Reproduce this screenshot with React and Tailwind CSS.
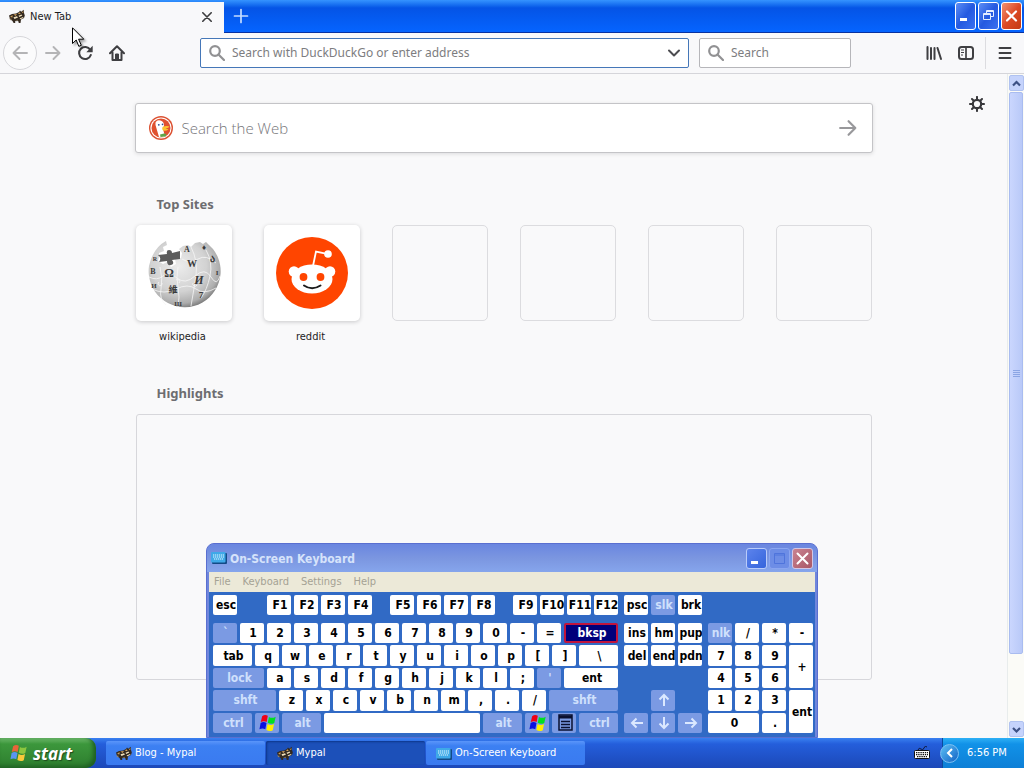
import React from "react";

const UI = "font-['DejaVu_Sans_Condensed','DejaVu_Sans',sans-serif]";
const HUMAN = "font-['Noto_Sans','Open_Sans',sans-serif]";

function Raccoon({ className = "h-4 w-4" }) {
  return (
    <svg viewBox="0 0 16 16" className={className} aria-hidden="true">
      <path d="M0 6.500l3-1.500 4-.5 3-1.500 1-1.500 1.200 1.200L14.700.8 15 4l.8 2.500L15 9l-3 1.500-.5 3.500H9.800l-.6-2-3.200.3.3 1.700H4.600L3.500 12 1 10z" fill="#33291f" />
      <path d="M1 8l2.500-2L3.500 8.500zM4.500 5.500L8 5 6.500 7zM8.800 5l2-1.700.8 1.700zM12.800 3.500l1.500-1.500v2z" fill="#cfa05c" />
      <path d="M4.500 8.300l3.500-1 1 1.200-3.500 1.500zM9.500 6.800l3-1.300.8 1-3 1.500zM10.500 9.500l3.500-1.500.5.800-3 1.500z" fill="#efe0bd" />
      <path d="M0 9.500l2.700.3L2 11.500zM6 11.500l3-.7-.3.900z" fill="#9c8b6f" />
    </svg>
  );
}

function KeyboardIcon({ className }) {
  return (
    <svg viewBox="0 0 16 16" className={className} aria-hidden="true">
      <rect x="1" y="3" width="15" height="11" rx="1" fill="#134a86" />
      <rect x="0" y="2" width="14.500" height="10.500" rx="1" fill="#3fa9e8" />
      <path d="M2 5h11M2 7h11M3 9h9" stroke="#e6faff" strokeWidth="1.200" strokeDasharray="1.300 .7" />
    </svg>
  );
}

function Flag({ className, soft }) {
  const c = soft ? ["#e8643a", "#8cc63f", "#5a95f0", "#f8c93a"] : ["#f00014", "#00e020", "#0a10e0", "#ffef00"];
  return (
    <svg viewBox="0 0 20 20" className={className} aria-hidden="true">
      <path d="M3.500 2.500Q6.500 0 9.800 2L8.500 9Q5.500 7 2 9z" fill={c[0]} />
      <path d="M11 3.200Q14.500 5.500 18.500 3L17 10Q13.500 12 9.800 9.800z" fill={c[1]} />
      <path d="M1.800 10Q5 8 8.300 10L7 17Q4 15 .5 17z" fill={c[2]} />
      <path d="M9.500 11Q13 13.300 16.700 11L15.300 18Q12 20 8.200 17.800z" fill={c[3]} />
    </svg>
  );
}

function Magnifier() {
  return (
    <svg viewBox="0 0 16 16" className="h-4 w-4 shrink-0" fill="none" stroke="#919193" strokeWidth="2.200" aria-hidden="true">
      <circle cx="6" cy="6" r="4.800" />
      <path d="M9.500 9.500L15 15" strokeLinecap="round" />
    </svg>
  );
}

function Arrow({ className, flip, color = "#b4b4b6" }) {
  return (
    <svg viewBox="0 0 16 16" className={className} fill="none" stroke={color} strokeWidth="1.900" strokeLinecap="round" strokeLinejoin="round" aria-hidden="true">
      {flip ? <path d="M15 8H1.500M7.500 2L1.500 8l6 6" /> : <path d="M1 8h13.500M8.500 2l6 6-6 6" />}
    </svg>
  );
}

function TitleBar() {
  return (
    <div className="flex h-[33px] border-b border-[#0831a0] bg-linear-to-b from-[#3593ff] via-[#0554e6] via-25% to-[#0564ff]">
      <div className="mt-[2px] -mb-px flex w-56 items-center bg-[#f8f8fa] pr-[11px] pb-px pl-[9px]">
        <Raccoon />
        <span className="ml-[5px] flex-1 text-[11px] text-[#1c1c1e]">New Tab</span>
        <button aria-label="Close tab" className="flex h-4 w-3 items-center justify-center">
          <svg viewBox="0 0 10 10" className="h-[10px] w-[10px]" stroke="#3c3c3e" strokeWidth="1.600" strokeLinecap="round">
            <path d="M.8.8l8.400 8.400M9.200.8L.8 9.200" />
          </svg>
        </button>
      </div>
      <button aria-label="New tab" className="ml-[9px] flex items-center">
        <svg viewBox="0 0 16 16" className="h-4 w-4" stroke="#c5dcff" strokeWidth="1.700" strokeLinecap="round">
          <path d="M8 1.500v13M1.500 8h13" />
        </svg>
      </button>
      <div className="ml-auto flex gap-[2px] pt-[2px] pr-[2px]">
        <button aria-label="Minimize" className="h-7 w-[21px] rounded-[3px] border border-white bg-linear-to-br from-[#5d8df5] via-[#2459e0] to-[#3b71f0]">
          <svg viewBox="0 0 19 26" className="h-full w-full"><path d="M4 15h7v3H4z" fill="#fff" /></svg>
        </button>
        <button aria-label="Restore" className="h-7 w-[21px] rounded-[3px] border border-white bg-linear-to-br from-[#5d8df5] via-[#2459e0] to-[#3b71f0]">
          <svg viewBox="0 0 19 26" className="h-full w-full" fill="none" stroke="#e4edff">
            <path d="M7.500 10V7.500h7v6H12M7.500 8.500h7M4.500 10.500h7v6h-7zM4.500 11.500h7" />
          </svg>
        </button>
        <button aria-label="Close" className="h-7 w-[21px] rounded-[3px] border border-white bg-linear-to-br from-[#f0906f] via-[#dd4a24] to-[#c33a12]">
          <svg viewBox="0 0 19 26" className="h-full w-full" stroke="#fff" strokeWidth="2.200" strokeLinecap="round">
            <path d="M5 8.500l9 9M14 8.500l-9 9" />
          </svg>
        </button>
      </div>
    </div>
  );
}

function Toolbar() {
  return (
    <div className="flex h-[41px] items-center border-b border-[#d5d5da] bg-[#f8f8fa] pl-[3px]">
      <button aria-label="Back" className="flex h-[34px] w-[34px] items-center justify-center rounded-full border border-[#d6d6da] bg-[#fbfbfc]">
        <Arrow flip className="h-4 w-4" />
      </button>
      <button aria-label="Forward" className="ml-2"><Arrow className="h-4 w-4" /></button>
      <button aria-label="Reload" className="ml-4">
        <svg viewBox="0 0 16 16" className="h-4 w-4" fill="none" stroke="#3f3f42" strokeWidth="2.100">
          <path d="M13.200 4.800A6 6 0 1 0 13.800 10" strokeLinecap="round" />
          <path d="M15.700.8v6.400H9.300z" fill="#3f3f42" stroke="none" />
        </svg>
      </button>
      <button aria-label="Home" className="ml-4">
        <svg viewBox="0 0 16 16" className="h-4 w-4" fill="none" stroke="#3f3f42" strokeWidth="2" strokeLinejoin="round" strokeLinecap="round">
          <path d="M1 8.300L8 1.300l7 7M3.500 7.500V15h9V7.500" />
          <path d="M6.500 15V9h3v6z" fill="#3f3f42" strokeWidth="1" />
        </svg>
      </button>
      <div className={`ml-[75px] flex h-[30px] flex-1 items-center rounded-[2px] border border-[#4577b8] bg-white pr-[7px] pl-2 ${HUMAN}`}>
        <Magnifier />
        <input aria-label="Address" placeholder="Search with DuckDuckGo or enter address" className="ml-[7px] min-w-0 flex-1 text-[12px] outline-none placeholder:text-[#7d7d80]" />
        <button aria-label="Show history">
          <svg viewBox="0 0 14 14" className="h-[14px] w-[14px]" fill="none" stroke="#4c4c50" strokeWidth="2" strokeLinecap="round" strokeLinejoin="round"><path d="M2 4.500l5 5 5-5" /></svg>
        </button>
      </div>
      <div className={`ml-[10px] flex h-[30px] w-[152px] items-center rounded-[2px] border border-[#b6b6ba] bg-white px-2 ${HUMAN}`}>
        <Magnifier />
        <input aria-label="Search" placeholder="Search" className="ml-[7px] min-w-0 flex-1 text-[12px] outline-none placeholder:text-[#7d7d80]" />
      </div>
      <button aria-label="Library" className="ml-[75px]">
        <svg viewBox="0 0 16 16" className="h-4 w-4" fill="none" stroke="#3f3f42" strokeWidth="2" strokeLinecap="round"><path d="M1.500 2v12M5 3v11M8.500 3v11M11.500 3l3.500 11" /></svg>
      </button>
      <button aria-label="Sidebars" className="ml-4">
        <svg viewBox="0 0 16 16" className="h-4 w-4" fill="none" stroke="#3f3f42" strokeWidth="2">
          <rect x="1" y="2" width="14" height="12" rx="2.500" />
          <path d="M8 2v12" strokeWidth="1.700" />
          <path d="M3 5h3M3 7.500h3M3 10h2" strokeWidth="1" />
        </svg>
      </button>
      <div className="ml-[11px] flex h-8 items-center border-l border-[#dcdce0] pr-[11px] pl-[11px]">
        <button aria-label="Open menu">
          <svg viewBox="0 0 16 16" className="h-4 w-4" stroke="#3f3f42" strokeWidth="1.900" strokeLinecap="round"><path d="M2.500 3h11M2.500 8h11M2.500 13h11" /></svg>
        </button>
      </div>
    </div>
  );
}

function Duck() {
  return (
    <svg viewBox="0 0 24 24" className="h-6 w-6 shrink-0" aria-hidden="true">
      <circle cx="12" cy="12" r="12" fill="#dc5233" />
      <circle cx="12" cy="12" r="10.600" fill="#fff" />
      <circle cx="12" cy="12" r="9.500" fill="#e0512f" />
      <path d="M6.500 6.500Q8 3.500 11.500 4.500 15 5.500 15 9.500L14 13l2 7.500Q13 22 10 21L7.500 12.500Q6 9 6.500 6.500z" fill="#fff" />
      <path d="M13.500 11Q17 9.500 20.500 10.500 20 12 16.500 12.500 18.500 13 19.500 13.500 17 15.500 14 14.500 12.500 13.500 13.500 11z" fill="#fdc32f" />
      <path d="M11 18.500l4-1 2.500.5-1 2.500-5 .5z" fill="#5fa548" />
      <circle cx="9.800" cy="8.800" r=".9" fill="#2d4f8e" />
      <circle cx="13.500" cy="8.400" r=".8" fill="#2d4f8e" />
    </svg>
  );
}

function WikipediaGlobe() {
  return (
    <svg viewBox="0 0 76 72" className="h-[72px] w-[76px]" role="img" aria-label="Wikipedia">
      <defs>
        <radialGradient id="globe" cx=".42" cy=".38" r=".64">
          <stop offset="0" stopColor="#ececec" />
          <stop offset=".6" stopColor="#d2d2d2" />
          <stop offset=".88" stopColor="#adadad" />
          <stop offset="1" stopColor="#7c7c7c" />
        </radialGradient>
      </defs>
      <path
        d="M20 4l1 4-4 2 1 4-5 2v4l-1 4 5 3 4-2 4 5 5-3-1-5 6-1 1-5-3-4 4-3 5-1 3 2 4-4 5-1 3 2 3-2 3 3 4 4A36 36 0 1 1 3 29Q7 11 20 4z"
        fill="url(#globe)"
      />
      <path d="M12 18l9-1q-1-4 2-4t3 3l8-2v8l-8 1q3 4-1 5t-4-4l-8 1q3-4-1-7z" fill="#5c5c5c" />
      <g fill="none" stroke="#f6f6f6" strokeWidth=".8">
        <path d="M14 30q3 12 1 22t5 16M32 30q-2 10 0 20t0 20M45 10q7 14 5 28t-5 31M60 13q7 12 4 26t-9 22" />
        <path d="M3 40q8 4 14-1t14 2 18-2 16 1 9-1M6 52q12 6 24 0t20 0 20-1M36 22q8 5 16 0t18 4" />
        <path d="M30 43a2 2 0 1 1 3 3M47 46a2 2 0 1 0 4 2M16 46a2 2 0 1 1-3-1" />
      </g>
      <g fill="#3a3a3a" fontFamily="Liberation Serif, serif" fontWeight="bold" textAnchor="middle">
        <text x="23" y="40" fontSize="12">Ω</text>
        <text x="46" y="30" fontSize="10">W</text>
        <text x="53" y="47" fontSize="12" fontStyle="italic">И</text>
        <text x="27" y="56" fontSize="9" fontFamily="Noto Sans CJK TC, sans-serif">維</text>
        <text x="66" y="25" fontSize="10">ა</text>
        <text x="55" y="61" fontSize="9">7</text>
        <text x="41" y="15" fontSize="8">A</text>
        <text x="58" y="13" fontSize="8">♦</text>
        <text x="7" y="37" fontSize="8">B</text>
        <text x="8" y="51" fontSize="7">И</text>
        <text x="9" y="24" fontSize="6">R</text>
        <text x="32" y="69" fontSize="7">Ш</text>
        <text x="71" y="38" fontSize="7">I</text>
      </g>
    </svg>
  );
}

function RedditFace() {
  return (
    <svg viewBox="0 0 72 72" className="h-[72px] w-[72px]" role="img" aria-label="Reddit">
      <circle cx="36" cy="36" r="36" fill="#ff4500" />
      <path d="M37 29l3-14.500 11 2.300" fill="none" stroke="#fff" strokeWidth="1.800" />
      <circle cx="52" cy="17" r="3.800" fill="#fff" />
      <circle cx="18" cy="34.500" r="5.300" fill="#fff" />
      <circle cx="54" cy="34.500" r="5.300" fill="#fff" />
      <ellipse cx="36" cy="42" rx="20.500" ry="14.500" fill="#fff" />
      <circle cx="27.500" cy="40" r="3.900" fill="#ff4500" />
      <circle cx="44.500" cy="40" r="3.900" fill="#ff4500" />
      <path d="M28 48.500q8 5.500 16.500 0" fill="none" stroke="#1c1c1c" strokeWidth="2" strokeLinecap="round" />
    </svg>
  );
}

function NewTabPage() {
  return (
    <main className={`relative min-w-0 flex-1 overflow-hidden bg-[#f9f9fa] ${HUMAN}`}>
      <button aria-label="Customize" className="absolute top-[22px] right-[22px]">
        <svg viewBox="0 0 16 16" className="h-4 w-4" fill="none" stroke="#38383b" strokeWidth="2.200" strokeLinecap="round">
          <circle cx="8" cy="8" r="4.200" />
          <path d="M8 .9v2.300M8 12.800v2.300M.9 8h2.300M12.800 8h2.300M3 3l1.500 1.500M11.500 11.500L13 13M3 13l1.500-1.500M11.500 4.500L13 3" strokeWidth="2" />
        </svg>
      </button>
      <div className="mx-auto w-[736px] pt-[29px]">
        <div className="-mx-px flex h-[50px] items-center rounded-[3px] border border-[#c4c4c7] bg-white px-[13px] shadow-[0_1px_4px_rgba(12,12,13,0.12)]">
          <Duck />
          <input aria-label="Search the Web" placeholder="Search the Web" className="ml-[9px] flex-1 font-['Open_Sans','Noto_Sans',sans-serif] text-[15px] font-light outline-none placeholder:text-[#76767a]" />
          <button aria-label="Submit search" className="mr-[2px]"><Arrow className="h-[18px] w-[18px]" color="#98989b" /></button>
        </div>
        <h2 className="mt-10 ml-[21px] text-[13px] leading-[22px] font-bold text-[#6d6d70]">Top Sites</h2>
        <ul className={`mt-[10px] flex justify-between text-center text-[11px] text-[#1c1c1e] ${UI}`}>
          <li className="w-24">
            <a href="#wikipedia" className="block">
              <span className="flex h-24 items-center justify-center rounded-[5px] bg-white shadow-[0_1px_4px_rgba(12,12,13,0.2)]"><WikipediaGlobe /></span>
              <span className="mt-2 block pr-[2px] leading-4">wikipedia</span>
            </a>
          </li>
          <li className="w-24">
            <a href="#reddit" className="block">
              <span className="flex h-24 items-center justify-center rounded-[5px] bg-white shadow-[0_1px_4px_rgba(12,12,13,0.2)]"><RedditFace /></span>
              <span className="mt-2 block pr-[2px] leading-4">reddit</span>
            </a>
          </li>
          {[1, 2, 3, 4].map((n) => (
            <li key={n} className="h-24 w-24 rounded-[5px] border border-[#dcdcdf]" />
          ))}
        </ul>
        <h2 className="mt-[37px] ml-[21px] text-[13px] leading-[22px] font-bold text-[#6d6d70]">Highlights</h2>
        <div className="mt-[10px] h-[266px] rounded-[3px] border border-[#d7d7db]" />
      </div>
    </main>
  );
}

function ScrollButton({ d, label }) {
  return (
    <button aria-label={label} className="flex h-4 w-[15px] items-center justify-center rounded-[2px] border border-[#b0c2f0] bg-[#c5d3fc]">
      <svg viewBox="0 0 9 9" className="h-[9px] w-[9px]" fill="none" stroke="#3d5185" strokeWidth="2.200"><path d={d} /></svg>
    </button>
  );
}

function ScrollBar() {
  return (
    <div className="flex w-[17px] flex-col items-center border-l border-[#e8ecec] bg-[#fbfbf7] py-px">
      <ScrollButton label="Scroll up" d="M1 6.500L4.500 3 8 6.500" />
      <div className="flex w-full flex-1 flex-col items-center pt-px pb-[67px]">
        <div className="flex w-[14px] flex-1 flex-col items-center justify-center gap-px rounded-[2px] border border-[#a9bcf0] bg-linear-to-r from-[#cad6fe] to-[#b9c9f8]">
          {[0, 1, 2, 3].map((n) => (
            <span key={n} className="h-px w-[7px] bg-[#8ba5e4]" />
          ))}
        </div>
      </div>
      <ScrollButton label="Scroll down" d="M1 3l3.500 3.500L8 3" />
    </div>
  );
}

function Key({ children, className = "w-6", off, label }) {
  return (
    <button
      aria-label={label}
      className={`flex h-full items-center justify-center overflow-hidden rounded-[2px] pl-[2px] text-[12px] leading-none font-bold ${off ? "bg-[#7b9ae3] text-[#cfe0fc]" : "bg-white text-black"} ${className}`}
    >
      {children}
    </button>
  );
}

const keys = (s) => s.split(" ").map((k) => <Key key={k}>{k}</Key>);

function KeyRow({ children, className = "gap-[3px]" }) {
  return <div className={`flex min-h-0 ${className}`}>{children}</div>;
}

function KeyArrow({ d, label, className }) {
  return (
    <Key off label={label} className={className}>
      <svg viewBox="0 0 14 14" className="h-[14px] w-[14px]" fill="none" stroke="#dbe8ff" strokeWidth="2"><path d={d} /></svg>
    </Key>
  );
}

function OnScreenKeyboard() {
  return (
    <section aria-label="On-Screen Keyboard" className="absolute bottom-[30px] left-[206px] w-[612px] overflow-hidden rounded-t-lg border border-[#5a6fd0] bg-[#6f86dc]">
      <div className="flex h-7 items-center bg-linear-to-b from-[#6a86e0] via-[#7b96e0] to-[#86a5ec] pr-1 pl-1">
        <KeyboardIcon className="h-4 w-4" />
        <h1 className="ml-[3px] flex-1 pt-[2px] text-[12px] font-bold text-[#d6e3fb]">On-Screen Keyboard</h1>
        <div className="flex gap-[2px]">
          <button aria-label="Minimize keyboard" className="h-[21px] w-[21px] rounded-[3px] border border-[#b9cbfa] bg-linear-to-br from-[#5c83ec] to-[#3564dc]">
            <svg viewBox="0 0 19 19" className="h-full w-full"><path d="M4 12h7v3H4z" fill="#fff" /></svg>
          </button>
          <button aria-label="Maximize keyboard" disabled className="h-[21px] w-[21px] rounded-[3px] border border-[#8ba6f0] bg-[#6d8de6]">
            <svg viewBox="0 0 19 19" className="h-full w-full" fill="none" stroke="#4f74dc"><path d="M4.500 4.500h10v10h-10zM4.500 6h10" /></svg>
          </button>
          <button aria-label="Close keyboard" className="h-[21px] w-[21px] rounded-[3px] border border-[#d3c6e4] bg-linear-to-br from-[#c98391] to-[#a95767]">
            <svg viewBox="0 0 19 19" className="h-full w-full" stroke="#fff" strokeWidth="2" strokeLinecap="round"><path d="M4.500 4.500l10 10M14.500 4.500l-10 10" /></svg>
          </button>
        </div>
      </div>
      <div className="mx-[2px] flex h-5 items-center gap-3 bg-[#ece9d8] px-[5px] text-[11px] text-[#a5a294]">
        <button>File</button>
        <button>Keyboard</button>
        <button>Settings</button>
        <button>Help</button>
      </div>
      <div className="mx-[2px] flex justify-between bg-[#316ac5] pt-[3px] pr-[2px] pb-1 pl-1">
        <div className="flex w-[405px] flex-col gap-2">
          <KeyRow className="h-5 gap-[18px]">
            <Key className="mr-3 w-6">esc</Key>
            <div className="flex gap-[3px]">{keys("F1 F2 F3 F4")}</div>
            <div className="flex gap-[3px]">{keys("F5 F6 F7 F8")}</div>
            <div className="flex gap-[3px]">{keys("F9 F10 F11 F12")}</div>
          </KeyRow>
          <div className="grid h-[110px] grid-rows-5 gap-[2px]">
            <KeyRow>
              <Key off>`</Key>
              {keys("1 2 3 4 5 6 7 8 9 0 - =")}
              <button className="h-full flex-1 rounded-[2px] border-2 border-[#c0143c] bg-[#00007b] pl-[2px] text-[12px] leading-none font-bold text-white">bksp</button>
            </KeyRow>
            <KeyRow>
              <Key className="w-[39px]">tab</Key>
              {keys("q w e r t y u i o p [ ]")}
              <Key className="flex-1">\</Key>
            </KeyRow>
            <KeyRow>
              <Key off className="w-[51px]">lock</Key>
              {keys("a s d f g h j k l ;")}
              <Key off>'</Key>
              <Key className="flex-1">ent</Key>
            </KeyRow>
            <KeyRow>
              <Key off className="w-[63px]">shft</Key>
              {keys("z x c v b n m , . /")}
              <Key off className="flex-1">shft</Key>
            </KeyRow>
            <KeyRow>
              <Key off className="w-[39px]">ctrl</Key>
              <Key off label="Windows"><Flag className="h-[18px] w-[18px] shrink-0" /></Key>
              <Key off className="w-[39px]">alt</Key>
              <Key label="Space" className="flex-1" />
              <Key off className="w-[39px]">alt</Key>
              <Key off label="Windows"><Flag className="h-[18px] w-[18px] shrink-0" /></Key>
              <Key off label="Menu">
                <svg viewBox="0 0 15 17" className="h-[17px] w-[15px] shrink-0" fill="none" stroke="#0a1030">
                  <path d="M1 1h13v15H1z" strokeWidth="1.500" />
                  <path d="M1 3h13" strokeWidth="3" />
                  <path d="M3 7.500h9M3 10.500h9M3 13.500h9" strokeWidth="1.300" />
                </svg>
              </Key>
              <Key off className="w-[39px]">ctrl</Key>
            </KeyRow>
          </div>
        </div>
        <div className="flex flex-col gap-2">
          <KeyRow className="h-5 gap-[3px]">
            <Key>psc</Key>
            <Key off>slk</Key>
            <Key>brk</Key>
          </KeyRow>
          <div className="grid h-[110px] grid-cols-3 grid-rows-5 gap-x-[3px] gap-y-[2px]">
            {keys("ins hm pup del end pdn")}
            <KeyArrow label="Up" d="M7 13V2M2.500 6.500L7 2l4.500 4.500" className="col-start-2 row-start-4 w-6" />
            <KeyArrow label="Left" d="M13 7H2M6.500 2.500L2 7l4.500 4.500" className="col-start-1 row-start-5 w-6" />
            <KeyArrow label="Down" d="M7 1v11M2.500 7.500L7 12l4.500-4.500" className="row-start-5 w-6" />
            <KeyArrow label="Right" d="M1 7h11M7.500 2.500L12 7l-4.500 4.500" className="row-start-5 w-6" />
          </div>
        </div>
        <div className="flex flex-col justify-end">
          <div className="grid h-[110px] grid-cols-4 grid-rows-5 gap-x-[3px] gap-y-[2px]">
            <Key off>nlk</Key>
            {keys("/ * - 7 8 9")}
            <Key className="row-span-2 w-6">+</Key>
            {keys("4 5 6 1 2 3")}
            <Key className="row-span-2 w-6">ent</Key>
            <Key className="col-span-2">0</Key>
            <Key>.</Key>
          </div>
        </div>
      </div>
    </section>
  );
}

function Task({ icon, children, active }) {
  return (
    <button className={`flex h-6 w-[159px] items-center gap-[3px] rounded-[2px] pt-px text-[11px] text-white ${active ? "bg-[#1c50b9] pl-[11px] shadow-[inset_1px_1px_2px_#0d3589]" : "bg-linear-to-b from-[#5a95fa] via-[#3c80f2] via-20% to-[#3a7af0] pl-[10px]"}`}>
      {icon}
      {children}
    </button>
  );
}

function Taskbar() {
  return (
    <footer className="flex h-[30px] bg-linear-to-b from-[#3a80f0] via-[#245edb] via-20% to-[#1c48b8]">
      <button className="flex w-24 items-center gap-[5px] rounded-r-[10px] bg-linear-to-b from-[#6cb86a] via-[#3c973c] via-20% to-[#2d7d2e] pl-[10px] font-['Open_Sans','Liberation_Sans',sans-serif] text-[17px] font-bold text-white italic shadow-[inset_-3px_-2px_4px_#1f5f22]">
        <Flag soft className="h-[18px] w-[18px]" />
        <span className="leading-none [text-shadow:1px_1px_1px_#1d4a1d]">start</span>
      </button>
      <div className="ml-[10px] flex items-center gap-px">
        <Task icon={<Raccoon />}>Blog - Mypal</Task>
        <Task active icon={<Raccoon />}>Mypal</Task>
        <Task icon={<KeyboardIcon className="h-4 w-4" />}>On-Screen Keyboard</Task>
      </div>
      <div className="ml-auto flex items-center pr-3">
        <svg viewBox="0 0 16 14" className="h-[14px] w-4" role="img" aria-label="Input language">
          <path d="M4 4q1-3 3-1t3-1 3-1" fill="none" stroke="#10183c" />
          <rect x=".5" y="4.500" width="15" height="8" rx="1" fill="#fff" stroke="#111" />
          <path d="M2 6.700h12M2 8.700h12M3 10.700h10" stroke="#111" strokeWidth="1.300" strokeDasharray="1.400 .8" />
        </svg>
      </div>
      <div className="flex w-[82px] items-center border-l border-[#0c4a9c] bg-linear-to-b from-[#2db0f5] via-[#1192e8] via-20% to-[#0e7fd6] text-[11px] text-white">
        <button aria-label="Show hidden icons" className="-ml-[3px] flex h-[19px] w-[19px] items-center justify-center rounded-full border border-[#7cc0f2] bg-linear-to-br from-[#5cc0f5] to-[#1462c4]">
          <svg viewBox="0 0 10 10" className="h-[10px] w-[10px]" fill="none" stroke="#fff" strokeWidth="2"><path d="M7 1L3 5l4 4" /></svg>
        </button>
        <time className="ml-2 pt-px whitespace-nowrap">6:56 PM</time>
      </div>
    </footer>
  );
}

export default function App() {
  return (
    <div className={`relative flex h-screen flex-col overflow-hidden ${UI}`}>
      <TitleBar />
      <Toolbar />
      <div className="flex min-h-0 flex-1">
        <NewTabPage />
        <ScrollBar />
      </div>
      <OnScreenKeyboard />
      <Taskbar />
      <svg viewBox="0 0 13 21" className="pointer-events-none absolute top-[27px] left-[72px] h-[21px] w-[13px] drop-shadow-[2px_2px_1px_rgba(0,0,0,0.35)]" aria-hidden="true">
        <path d="M.5.800v15.700l3.700-3.500 2.600 6.300 2.500-1-2.700-6.100h5.200z" fill="#fff" stroke="#000" />
      </svg>
    </div>
  );
}
